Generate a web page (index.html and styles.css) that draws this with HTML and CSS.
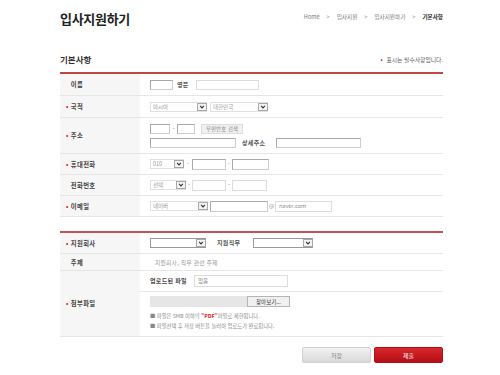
FILE: index.html
```html
<!DOCTYPE html>
<html lang="ko">
<head>
<meta charset="utf-8">
<link rel="stylesheet" href="styles.css">
</head>
<body>
<div class="page">
  <div class="header">
    <h1 class="title">입사지원하기</h1>
    <div class="crumb"><span>Home</span><span class="sep">&gt;</span><span>입사지원</span><span class="sep">&gt;</span><span>입사지원하기</span><span class="sep">&gt;</span><b>기본사항</b></div>
  </div>

  <div class="sec-head">
    <h2 class="sec-title">기본사항</h2>
    <div class="req-note"><span class="dot">•</span> 표시는 필수사항입니다.</div>
  </div>

  <div class="table">
    <div class="row r22">
      <div class="th"><span class="dot hide">•</span>이름</div>
      <div class="td">
        <span class="inp w23"></span>
        <span class="sub ml4">영문</span>
        <span class="inp light w63 ml7"></span>
      </div>
    </div>
    <div class="row r22">
      <div class="th"><span class="dot">•</span>국적</div>
      <div class="td">
        <span class="sel w57"><span class="txt">아시아</span><span class="arr"><svg viewBox="0 0 10 8"><path d="M2.5 2.5 L5 5.2 L7.5 2.5" /></svg></span></span>
        <span class="sel w58 ml3"><span class="txt">대한민국</span><span class="arr"><svg viewBox="0 0 10 8"><path d="M2.5 2.5 L5 5.2 L7.5 2.5" /></svg></span></span>
      </div>
    </div>
    <div class="row r36">
      <div class="th"><span class="dot">•</span>주소</div>
      <div class="td col">
        <div class="line">
          <span class="inp w20"></span>
          <span class="dash w7">-</span>
          <span class="inp w18"></span>
          <span class="btn-sm ml6">우편번호 검색</span>
        </div>
        <div class="line">
          <span class="inp w86"></span>
          <span class="sub ml6">상세주소</span>
          <span class="inp w85 ml11"></span>
        </div>
      </div>
    </div>
    <div class="row r21">
      <div class="th"><span class="dot">•</span>휴대전화</div>
      <div class="td">
        <span class="sel h11 w34"><span class="txt">010</span><span class="arr"><svg viewBox="0 0 10 8"><path d="M2.5 2.5 L5 5.2 L7.5 2.5" /></svg></span></span>
        <span class="dash w8">-</span>
        <span class="inp h11 w34"></span>
        <span class="dash w6">-</span>
        <span class="inp h11 w37"></span>
      </div>
    </div>
    <div class="row r21">
      <div class="th"><span class="dot hide">•</span>전화번호</div>
      <div class="td">
        <span class="sel h11 w36"><span class="txt">선택</span><span class="arr"><svg viewBox="0 0 10 8"><path d="M2.5 2.5 L5 5.2 L7.5 2.5" /></svg></span></span>
        <span class="dash w6">-</span>
        <span class="inp light h11 w34"></span>
        <span class="dash w6">-</span>
        <span class="inp light h11 w35"></span>
      </div>
    </div>
    <div class="row r21">
      <div class="th"><span class="dot">•</span>이메일</div>
      <div class="td">
        <span class="sel h11 w58"><span class="txt">네이버</span><span class="arr"><svg viewBox="0 0 10 8"><path d="M2.5 2.5 L5 5.2 L7.5 2.5" /></svg></span></span>
        <span class="inp h11 w58 ml2"></span>
        <span class="at">@</span>
        <span class="inp light h11 w57 val">naver.com</span>
      </div>
    </div>
  </div>

  <div class="table t2">
    <div class="row r21">
      <div class="th"><span class="dot">•</span>지원회사</div>
      <div class="td">
        <span class="sel dark h11 w56"><span class="txt"></span><span class="arr"><svg viewBox="0 0 10 8"><path d="M2.5 2.5 L5 5.2 L7.5 2.5" /></svg></span></span>
        <span class="sub ml11">지원직무</span>
        <span class="sel dark h11 w60 ml13"><span class="txt"></span><span class="arr"><svg viewBox="0 0 10 8"><path d="M2.5 2.5 L5 5.2 L7.5 2.5" /></svg></span></span>
      </div>
    </div>
    <div class="row r17">
      <div class="th"><span class="dot hide">•</span>주제</div>
      <div class="td"><span class="hint">지원회사, 직무 관련 주제</span></div>
    </div>
    <div class="row rfile">
      <div class="th"><span class="dot">•</span>첨부파일</div>
      <div class="td col nopad">
        <div class="subrow s1">
          <span class="sub dk">업로드된 파일</span>
          <span class="inp light h12 w94 ml7 val">없음</span>
        </div>
        <div class="subrow s2">
          <div class="file"><span class="file-bar"></span><span class="file-btn">찾아보기...</span></div>
          <p class="note">■ 파일은 5MB 이하의 <b class="red">"PDF"</b>파일로 제한됩니다.</p>
          <p class="note">■ 파일선택 후 저장 버튼을 눌러야 업로드가 완료됩니다.</p>
        </div>
      </div>
    </div>
  </div>

  <div class="actions">
    <button class="btn save">저장</button>
    <button class="btn submit">제출</button>
  </div>
</div>
</body>
</html>
```

FILE: styles.css
```css
* { box-sizing: border-box; }
html, body { margin: 0; padding: 0; background: #fff; }
body {
  font-family: "Noto Sans CJK KR", "Noto Sans", "Liberation Sans", sans-serif;
  color: #333;
}
.page {
  width: 383px;
  margin-left: 60px;
}
.header {
  display: flex;
  justify-content: space-between;
  align-items: center;
  height: 38px;
  padding-top: 0;
}
.title {
  margin: 0;
  font-size: 13px;
  line-height: 16px;
  font-weight: 700;
  color: #222;
  letter-spacing: -0.3px;
}
.crumb {
  font-size: 5.6px;
  line-height: 8px;
  color: #777;
  display: flex;
  align-items: center;
  margin-top: -4px;
}
.crumb .sep { margin: 0 7px; color: #999; }
.crumb b { color: #222; font-weight: 700; }

.sec-head {
  display: flex;
  justify-content: space-between;
  align-items: flex-end;
  margin-top: 14px;
  height: 22px;
  padding-bottom: 8px;
  border-bottom: 2px solid #c24545;
}
.sec-title {
  margin: 0;
  font-size: 8.5px;
  line-height: 10px;
  font-weight: 700;
  color: #333;
}
.req-note {
  font-size: 5.8px;
  line-height: 8px;
  color: #555;
}
.dot { color: #d22; font-weight: 700; margin-right: 2px; }
.dot.hide { visibility: hidden; }

.table { width: 100%; }
.table.t2 {
  margin-top: 14px;
  border-top: 2px solid #c95050;
}
.row {
  display: flex;
  border-bottom: 1px solid #e6e6e6;
}
.r22 { height: 22px; }
.r36 { height: 36px; }
.r21 { height: 21px; }
.r17 { height: 17px; }
.rfile { height: 66px; }
.th {
  width: 80px;
  flex: none;
  background: #f6f6f6;
  display: flex;
  align-items: center;
  padding-left: 6px;
  font-size: 6.3px;
  font-weight: 700;
  color: #444;
  letter-spacing: 0.4px;
}
.td {
  flex: 1;
  display: flex;
  align-items: center;
  padding-left: 10px;
}
.td.col {
  flex-direction: column;
  align-items: flex-start;
  justify-content: center;
  gap: 4px;
}
.td.nopad { padding-left: 0; gap: 0; justify-content: flex-start; }
.line { display: flex; align-items: center; height: 10px; }

.inp {
  display: inline-flex;
  align-items: center;
  height: 10px;
  border: 1px solid #a9a9a9;
  border-right-color: #ccc;
  border-bottom-color: #ccc;
  background: #fff;
  flex: none;
}
.inp.light { border: 1px solid #dcdcdc; }
.val { font-size: 5.5px; color: #888; padding-left: 3px; }
.h11 { height: 11px; }
.h12 { height: 12px; }
.w18 { width: 18px; } .w20 { width: 20px; } .w23 { width: 23px; }
.w34 { width: 34px; } .w35 { width: 35px; } .w36 { width: 36px; } .w37 { width: 37px; }
.w56 { width: 56px; } .w57 { width: 57px; } .w58 { width: 58px; } .w60 { width: 60px; }
.w63 { width: 63px; } .w85 { width: 85px; } .w86 { width: 86px; } .w94 { width: 94px; }
.ml2 { margin-left: 2px; } .ml3 { margin-left: 3px; } .ml4 { margin-left: 4px; }
.ml6 { margin-left: 6px; } .ml7 { margin-left: 7px; } .ml11 { margin-left: 11px; } .ml13 { margin-left: 13px; }

.sub {
  font-size: 6px;
  font-weight: 700;
  color: #555;
  letter-spacing: 0.3px;
  line-height: 8px;
}
.sub.dk { color: #444; }
.dash {
  display: inline-block;
  text-align: center;
  font-size: 6px;
  color: #888;
  line-height: 8px;
}
.w6 { width: 6px; } .w7 { width: 7px; } .w8 { width: 8px; }
.at { width: 7px; text-align: center; font-size: 5.5px; color: #777; }

.sel {
  display: inline-flex;
  align-items: center;
  height: 10px;
  border: 1px solid #e0e0e0;
  background: #fff;
  flex: none;
  position: relative;
}
.sel.dark { border: 1px solid #999; }
.sel .txt {
  flex: 1;
  font-size: 5.5px;
  color: #999;
  padding-left: 2px;
  line-height: 8px;
}
.sel .arr {
  width: 10px;
  height: 100%;
  border: 1px solid #a8a8a8;
  background: #f3f3f3;
  display: flex;
  align-items: center;
  justify-content: center;
  margin-right: -1px;
}
.sel .arr svg { width: 8px; height: 6px; }
.sel .arr path { fill: none; stroke: #333; stroke-width: 1.4; }

.btn-sm {
  display: inline-flex;
  align-items: center;
  justify-content: center;
  width: 42px;
  height: 10px;
  background: #f0f0f0;
  border: 1px solid #ddd;
  font-size: 5.3px;
  color: #888;
  letter-spacing: 0.2px;
}

.hint { font-size: 5.8px; color: #999; padding-left: 5px; letter-spacing: 0.2px; }

.subrow { width: 100%; padding-left: 10px; }
.subrow.s1 {
  height: 21px;
  display: flex;
  align-items: center;
  border-bottom: 1px solid #e6e6e6;
}
.subrow.s2 { padding-top: 4px; }
.file { display: flex; height: 11px; }
.file-bar { width: 97px; height: 11px; background: #e6e6e6; }
.file-btn {
  width: 43px;
  height: 11px;
  background: #f0f0f0;
  border: 1px solid #b5b5b5;
  font-size: 5.5px;
  color: #333;
  display: flex;
  align-items: center;
  justify-content: center;
}
.note {
  margin: 0;
  font-size: 5.3px;
  line-height: 10px;
  color: #888;
}
.subrow.s2 .file { margin-bottom: 4px; }
.red { color: #d22; font-weight: 700; }

.actions {
  display: flex;
  justify-content: flex-end;
  gap: 3px;
  margin-top: 10px;
}
.btn {
  width: 69px;
  height: 16px;
  border-radius: 2px;
  font-family: inherit;
  font-size: 6px;
  padding: 0;
  cursor: pointer;
}
.btn.save {
  background: linear-gradient(#f2f2f2, #d9d9d9);
  border: 1px solid #d0d0d0;
  color: #888;
}
.btn.submit {
  background: linear-gradient(#d8262c, #b50f16);
  border: 1px solid #b01018;
  color: #fff;
}
```
